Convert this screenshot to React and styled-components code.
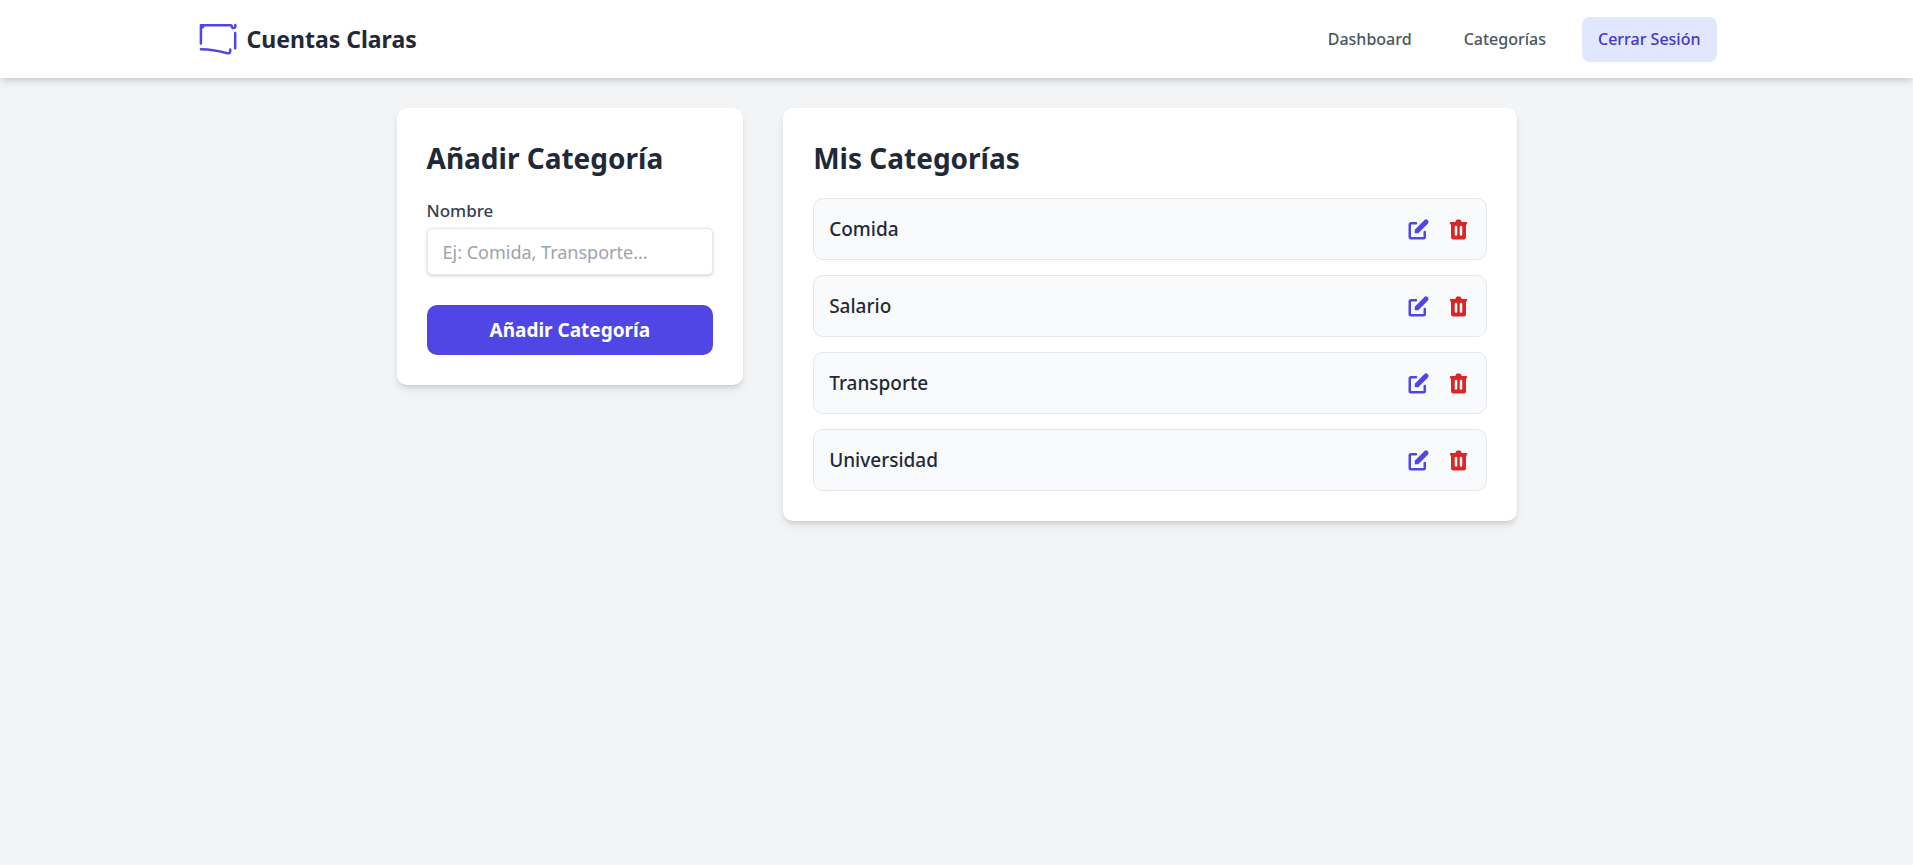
import React, { useState } from 'react';
import styled, { createGlobalStyle } from 'styled-components';

const GlobalStyle = createGlobalStyle`
  *, *::before, *::after { box-sizing: border-box; }
  body {
    margin: 0;
    background: #f3f4f6;
    color: #1f2937;
    font-family: "Noto Sans", "Open Sans", sans-serif;
    font-size: 19px;
    line-height: 30px;
  }
  button, input { font: inherit; }
`;

const cardShadow = '0 5px 8px -1px rgba(0, 0, 0, 0.1), 0 3px 5px -2px rgba(0, 0, 0, 0.1)';

const Header = styled.header`
  background: #ffffff;
  box-shadow: ${cardShadow};
`;

const HeaderInner = styled.div`
  display: flex;
  align-items: center;
  justify-content: space-between;
  max-width: 1600px;
  min-height: 78px;
  margin: 0 auto;
  padding: 16px 40px;
`;

const Brand = styled.a`
  display: flex;
  align-items: center;
  gap: 10px;
  color: #1f2937;
  font-size: 23px;
  font-weight: 700;
  text-decoration: none;
`;

const LogoMark = styled.svg`
  width: 40px;
  height: 40px;
  fill: none;
  stroke: #4f46e5;
  stroke-width: 2.5;
  stroke-linecap: round;
  stroke-linejoin: round;
`;

const Nav = styled.nav`
  display: flex;
  align-items: center;
  gap: 20px;
  font-size: 16px;
  font-weight: 500;
  line-height: 25px;
`;

const NavLink = styled.a`
  padding: 10px 16px;
  color: #4b5563;
  text-decoration: none;
`;

const LogoutButton = styled.button`
  padding: 10px 16px;
  border: 0;
  border-radius: 8px;
  background: #e0e7ff;
  color: #4338ca;
  font-weight: 500;
  line-height: 25px;
  cursor: pointer;
`;

const Main = styled.main`
  display: grid;
  grid-template-columns: repeat(3, minmax(0, 1fr));
  align-items: start;
  gap: 40px;
  max-width: 1160px;
  margin: 0 auto;
  padding: 30px 20px;
`;

const Card = styled.section`
  grid-column: span ${({ $span }) => $span};
  padding: 30px;
  border-radius: 10px;
  background: #ffffff;
  box-shadow: ${cardShadow};
`;

const CardTitle = styled.h2`
  margin: 0 0 20px;
  font-size: 28px;
  font-weight: 700;
  line-height: 40px;
`;

const Form = styled.form`
  display: flex;
  flex-direction: column;
`;

const Label = styled.label`
  margin-bottom: 5px;
  color: #374151;
  font-size: 17px;
  font-weight: 500;
  line-height: 25px;
`;

const TextInput = styled.input`
  width: 100%;
  height: 47px;
  margin-bottom: 30px;
  padding: 0 15px;
  border: 1px solid #e5e7eb;
  border-radius: 5px;
  background: #ffffff;
  color: #1f2937;
  font-size: 18px;
  box-shadow: 0 1px 4px rgba(0, 0, 0, 0.1), 0 1px 2px rgba(0, 0, 0, 0.1);
  &::placeholder { color: #9ca3af; opacity: 1; }
`;

const SubmitButton = styled.button`
  padding: 10px 20px;
  border: 0;
  border-radius: 10px;
  background: #4f46e5;
  color: #ffffff;
  font-weight: 700;
  cursor: pointer;
`;

const CategoryList = styled.ul`
  display: flex;
  flex-direction: column;
  gap: 15px;
  margin: 0;
  padding: 0;
  list-style: none;
`;

const CategoryRow = styled.li`
  display: flex;
  align-items: center;
  justify-content: space-between;
  padding: 15px;
  border: 1px solid #e5e7eb;
  border-radius: 10px;
  background: #f9fafb;
`;

const CategoryName = styled.span`
  font-weight: 500;
`;

const Actions = styled.div`
  display: flex;
  gap: 15px;
`;

const IconButton = styled.button`
  display: flex;
  padding: 0;
  border: 0;
  background: none;
  color: ${({ $danger }) => ($danger ? '#dc2626' : '#4f46e5')};
  cursor: pointer;
`;

const Icon = styled.svg`
  width: 25px;
  height: 25px;
  fill: currentColor;
`;

const EditIcon = () => (
  <Icon viewBox="0 0 20 20" aria-hidden="true">
    <path d="M17.414 2.586a2 2 0 00-2.828 0L7 10.172V13h2.828l7.586-7.586a2 2 0 000-2.828z" />
    <path fillRule="evenodd" clipRule="evenodd" d="M2 6a2 2 0 012-2h4a1 1 0 010 2H4v10h10v-4a1 1 0 112 0v4a2 2 0 01-2 2H4a2 2 0 01-2-2V6z" />
  </Icon>
);

const TrashIcon = () => (
  <Icon viewBox="0 0 20 20" aria-hidden="true">
    <path fillRule="evenodd" clipRule="evenodd" d="M9 2a1 1 0 00-.894.553L7.382 4H4a1 1 0 000 2v10a2 2 0 002 2h8a2 2 0 002-2V6a1 1 0 100-2h-3.382l-.724-1.447A1 1 0 0011 2H9zM7 8a1 1 0 012 0v6a1 1 0 11-2 0V8zm5-1a1 1 0 00-1 1v6a1 1 0 102 0V8a1 1 0 00-1-1z" />
  </Icon>
);

const Logo = () => (
  <LogoMark viewBox="0 0 40 40" aria-hidden="true">
    <path d="M3.9 24.4V6.3H33.6C34.6 6.3 34.8 6.8 34.8 7.8C34.8 9.6 38.3 9.6 38.3 7.6V6" />
    <path d="M4.6 8.4C6 8.6 6.4 7.8 6.3 6.6" />
    <path d="M38.2 14V29.2" />
    <path d="M3.9 30.2C14 30.2 21.5 31.8 29.5 34C32 34.6 33.2 34.2 33.2 32.2V30.4" />
  </LogoMark>
);

const categories = ['Comida', 'Salario', 'Transporte', 'Universidad'];

export default function App() {
  const [name, setName] = useState('');

  return (
    <>
      <GlobalStyle />
      <Header>
        <HeaderInner>
          <Brand href="#">
            <Logo />
            Cuentas Claras
          </Brand>
          <Nav>
            <NavLink href="#dashboard">Dashboard</NavLink>
            <NavLink href="#categorias">Categorías</NavLink>
            <LogoutButton type="button">Cerrar Sesión</LogoutButton>
          </Nav>
        </HeaderInner>
      </Header>
      <Main>
        <Card $span={1}>
          <CardTitle>Añadir Categoría</CardTitle>
          <Form onSubmit={(event) => event.preventDefault()}>
            <Label htmlFor="nombre">Nombre</Label>
            <TextInput
              id="nombre"
              type="text"
              placeholder="Ej: Comida, Transporte..."
              value={name}
              onChange={(event) => setName(event.target.value)}
            />
            <SubmitButton type="submit">Añadir Categoría</SubmitButton>
          </Form>
        </Card>
        <Card $span={2}>
          <CardTitle>Mis Categorías</CardTitle>
          <CategoryList>
            {categories.map((category) => (
              <CategoryRow key={category}>
                <CategoryName>{category}</CategoryName>
                <Actions>
                  <IconButton type="button" aria-label={`Editar ${category}`}>
                    <EditIcon />
                  </IconButton>
                  <IconButton type="button" $danger aria-label={`Eliminar ${category}`}>
                    <TrashIcon />
                  </IconButton>
                </Actions>
              </CategoryRow>
            ))}
          </CategoryList>
        </Card>
      </Main>
    </>
  );
}
